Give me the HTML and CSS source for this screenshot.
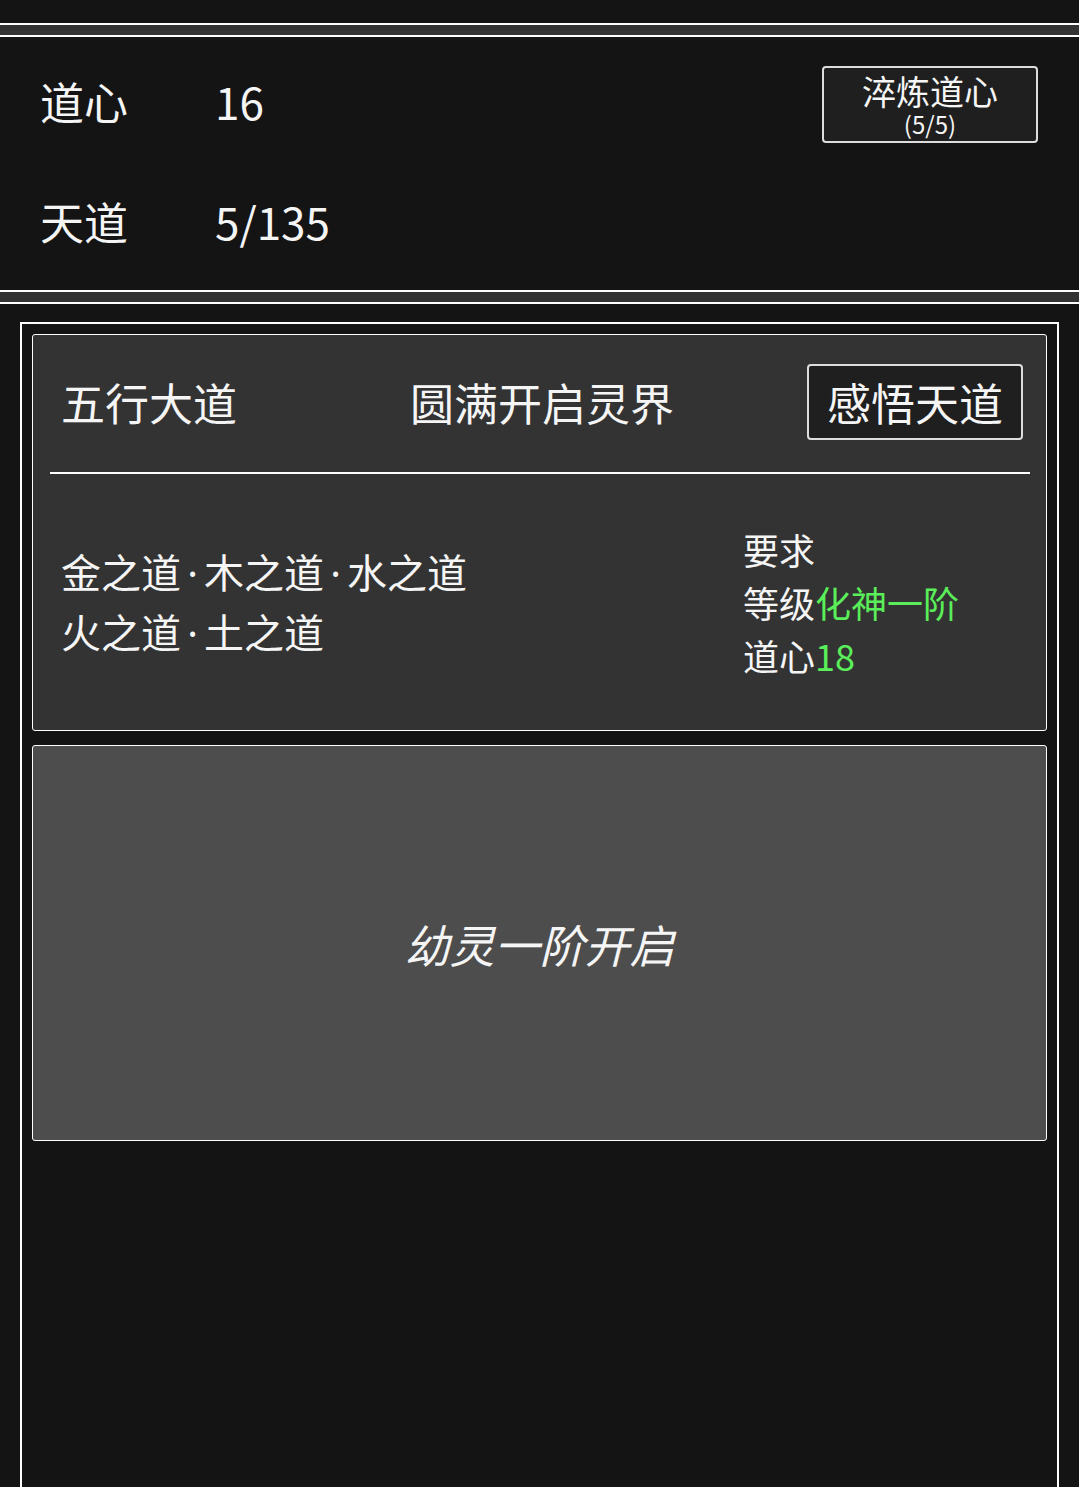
FILE: index.html
```html
<!DOCTYPE html>
<html lang="zh-CN">
<head>
<meta charset="utf-8">
<title>道心</title>
<link rel="stylesheet" href="styles.css">
</head>
<body>
<div class="top-gap"></div>
<div class="divider"></div>
<section class="stats">
  <div class="stat-row">
    <span class="stat-label">道心</span>
    <span class="stat-value">16</span>
    <button class="temper-btn">
      <span class="temper-title">淬炼道心</span>
      <span class="temper-count">(5/5)</span>
    </button>
  </div>
  <div class="stat-row">
    <span class="stat-label">天道</span>
    <span class="stat-value">5/135</span>
  </div>
</section>
<div class="divider"></div>
<div class="frame">
  <div class="card realm">
    <div class="realm-head">
      <span class="realm-name">五行大道</span>
      <span class="realm-goal">圆满开启灵界</span>
      <button class="comprehend-btn">感悟天道</button>
    </div>
    <div class="rule"></div>
    <div class="realm-body">
      <div class="paths">
        <div>金之道<span class="dot">·</span>木之道<span class="dot">·</span>水之道</div>
        <div>火之道<span class="dot">·</span>土之道</div>
      </div>
      <div class="reqs">
        <div>要求</div>
        <div>等级<span class="ok">化神一阶</span></div>
        <div>道心<span class="ok">18</span></div>
      </div>
    </div>
  </div>
  <div class="card unlock">
    <span class="unlock-text">幼灵一阶开启</span>
  </div>
</div>
</body>
</html>
```
FILE: styles.css
```css
html, body {
  margin: 0;
  padding: 0;
  background: #141414;
}
body {
  font-family: "Noto Sans CJK SC", "Noto Sans", sans-serif;
  color: #f5f5f5;
  overflow: hidden;
}
.top-gap {
  height: 23px;
}
.divider {
  height: 10px;
  background: #333;
  border-top: 2px solid #fff;
  border-bottom: 2px solid #fff;
}
.stats {
  height: 253px;
  box-sizing: border-box;
  padding: 4px 0 9px;
}
.stat-row {
  height: 120px;
  display: flex;
  align-items: center;
  padding-left: 40px;
  padding-right: 41px;
  font-size: 44px;
  line-height: 1;
}
.stat-label {
  width: 175px;
}
.stat-value {
  flex: 1;
}
.temper-btn {
  width: 216px;
  height: 77px;
  box-sizing: border-box;
  margin-top: 6px;
  border: 2px solid #ddd;
  border-radius: 4px;
  background: #1f1f1f;
  color: #f5f5f5;
  font-family: inherit;
  display: flex;
  flex-direction: column;
  align-items: center;
  justify-content: flex-start;
  padding: 6px 0 0;
}
.temper-title {
  font-size: 34px;
  line-height: 34px;
}
.temper-count {
  font-size: 24px;
  line-height: 32px;
}
.frame {
  margin: 18px 20px 0;
  border: 2px solid #fff;
  border-bottom: none;
  padding: 10px;
  min-height: 1200px;
}
.card {
  border: 1px solid #fff;
  border-radius: 3px;
}
.realm {
  background: #333;
  height: 397px;
  box-sizing: border-box;
  display: flex;
  flex-direction: column;
}
.realm-head {
  display: grid;
  grid-template-columns: 1fr auto 1fr;
  align-items: center;
  padding: 29px 23px 0 28px;
  font-size: 44px;
  line-height: 1;
}
.realm-goal {
  text-align: center;
}
.comprehend-btn {
  justify-self: end;
  width: 216px;
  height: 76px;
  box-sizing: border-box;
  border: 2px solid #ddd;
  border-radius: 4px;
  background: #1f1f1f;
  color: #f5f5f5;
  font-family: inherit;
  font-size: 44px;
  line-height: 1;
  padding: 0;
}
.rule {
  height: 2px;
  background: #fff;
  margin: 32px 16px 0 17px;
}
.realm-body {
  flex: 1;
  display: grid;
  grid-template-columns: 1fr 303px;
  align-items: center;
  padding-left: 28px;
}
.paths {
  font-size: 40px;
  line-height: 59px;
}
.dot {
  font-family: "Noto Sans", sans-serif;
  display: inline-block;
  width: 23px;
  text-align: center;
}
.reqs {
  font-size: 36px;
  line-height: 53px;
  padding-top: 1px;
}
.ok {
  color: #5aee5a;
}
.unlock {
  margin-top: 14px;
  height: 396px;
  box-sizing: border-box;
  background: #4d4d4d;
  display: flex;
  align-items: center;
  justify-content: center;
}
.unlock-text {
  font-size: 45px;
  font-style: italic;
  line-height: 1;
}
```
